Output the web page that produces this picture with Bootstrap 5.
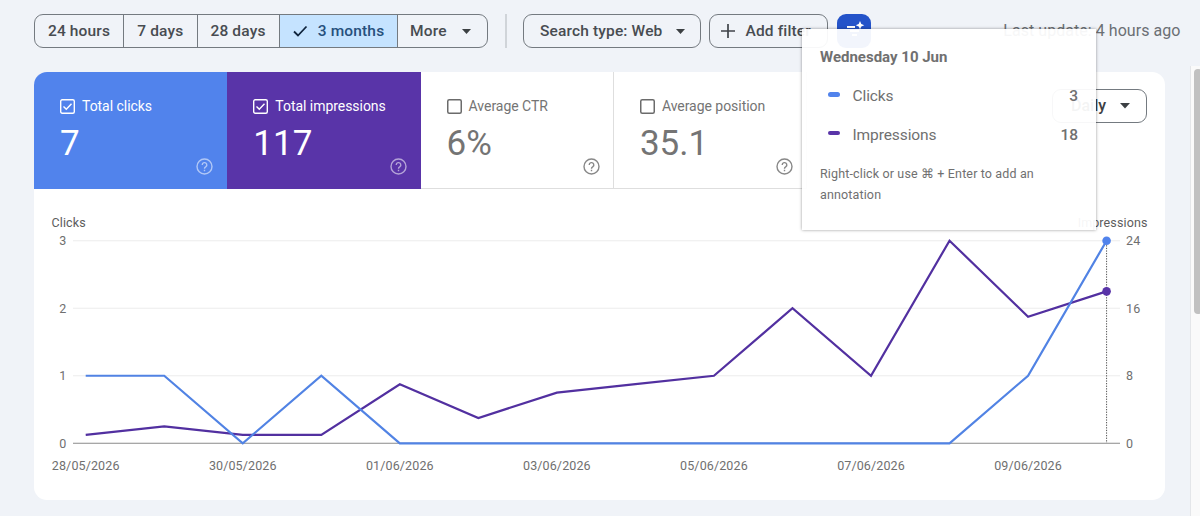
<!DOCTYPE html>
<html lang="en">
<head>
<meta charset="utf-8">
<title>Performance</title>
<link href="https://cdn.jsdelivr.net/npm/bootstrap@5.3.0/dist/css/bootstrap.min.css" rel="stylesheet">
<style>
body{width:1200px;height:516px;overflow:hidden;background:#f0f3f8;font-family:Roboto,"Liberation Sans",sans-serif;color:#3c4043}
.toolbar{height:71.5px;padding:14px 0 0 34px}
.toolbar .btn{height:34px;padding:0;font-size:15.5px;font-weight:500;line-height:32px;color:#484c51;border:1px solid #747a80;display:flex;align-items:center;justify-content:center;white-space:nowrap;letter-spacing:.15px;border-radius:9px}
.toolbar .btn-group .btn:not(:first-child){border-top-left-radius:0;border-bottom-left-radius:0}
.toolbar .btn-group .btn:not(:last-child){border-top-right-radius:0;border-bottom-right-radius:0}
.toolbar .btn-group .btn{flex:none}
.toolbar .chosen{background:#c5e3ff;color:#27507c}
.toolbar .ai-btn{background:#2453c9;border:0;width:34px}
.rule{width:2px;height:34px;background:#d0d4d9;margin:0 16px 0 17px}
.updated{font-size:16px;line-height:34px;color:#6b6f74;letter-spacing:.05px;margin-right:19.5px}
.panel{margin-left:34px;width:1131px;height:428.5px;border-radius:13px;background:#fff;overflow:hidden}
.tile{width:193.3px;height:117.5px;padding:24.5px 0 0 26px;border-right:1px solid #dedede;border-bottom:1px solid #dedede;color:#747474;position:relative}
.tile.on{color:#fff;border:0}
.tile .name{font-size:14px;line-height:20px;letter-spacing:-.04px;white-space:nowrap;gap:7px}
.tile .value{font-size:35px;line-height:40px;margin-top:7.5px;letter-spacing:0}
.tile .help{position:absolute;right:13px;bottom:13px;opacity:.85}
.tile.on .help{opacity:.55;right:14px;bottom:14px}
.clicks{background:#5183ec}
.impr{background:#5934a8}
.interval{width:95px;height:34px;margin:17.5px 18px 0 0;border:1px solid #747a80;border-radius:9px;font-size:16px;font-weight:500;color:#3c4043;padding:0 16px 0 18px}
.chart{display:block}
.chart text{font-size:12.5px;fill:#6f6f6f;letter-spacing:.12px}
.tip{position:absolute;left:802px;top:29px;width:293.5px;height:200.5px;background:rgba(255,255,255,.94);box-shadow:0 0 3px rgba(0,0,0,.4);color:#707070;padding:18px 17.5px 0 18px}
.tip .day{font-size:15px;line-height:20px;font-weight:700;letter-spacing:0}
.tip .line{font-size:15.5px;line-height:20px;letter-spacing:-.1px}
.tip .num{font-weight:500}
.dash{width:12px;height:4.5px;border-radius:2.5px;margin:0 13px 3px 7.5px}
.tip .hint{font-size:12.5px;line-height:21.5px;letter-spacing:.14px}
.track{position:absolute;right:0;top:66px;width:10px;bottom:0;background:#fafafa;border-left:1px solid #e4e6e9}
.thumb{width:8px;height:245px;margin:3px 0 0 3px;border-radius:5px;background:#c1c1c1}
</style>
</head>
<body class="position-relative">
<div class="toolbar d-flex align-items-start">
  <div class="btn-group">
    <button class="btn" style="width:90px">24 hours</button>
    <button class="btn" style="width:74.5px">7 days</button>
    <button class="btn" style="width:83px">28 days</button>
    <button class="btn chosen" style="width:119px"><svg width="17" height="14" viewBox="0 0 17 14" fill="none" stroke="#10253d" stroke-width="1.8" style="margin-right:9px"><path d="M2 7.500l4 4L14.500 2.500"/></svg>3 months</button>
    <button class="btn justify-content-start" style="width:91.5px;padding-left:12.5px">More<svg style="margin-left:15px" width="9" height="5"><path d="M0 0h9L4.500 5z" fill="#3c4043"/></svg></button>
  </div>
  <div class="rule"></div>
  <button class="btn justify-content-start" style="width:177.5px;margin-right:8.500px;padding-left:16px">Search type: Web<svg style="margin-left:14px" width="9" height="5"><path d="M0 0h9L4.500 5z" fill="#3c4043"/></svg></button>
  <button class="btn justify-content-start" style="width:119px;margin-right:9px;padding-left:10.5px"><svg width="14" height="14" style="margin-right:11px" stroke="#40444a" stroke-width="1.700"><path d="M7 0v14M0 7h14"/></svg>Add filter</button>
  <button class="btn ai-btn"><svg width="34" height="34" viewBox="0 0 34 34" fill="#fff"><path d="M10 12h8v2h-8zM13 16h9v2h-9zM15 20h5v2h-5zM23 7l1.300 3 3 1.300-3 1.300-1.300 3-1.300-3-3-1.300 3-1.300z"/></svg></button>
  <div class="updated ms-auto">Last update: 4 hours ago</div>
</div>

<div class="panel">
  <div class="d-flex">
    <div class="tile on clicks">
      <div class="name d-flex align-items-center"><svg width="15" height="15" fill="none" stroke="#fff" stroke-width="1.400"><rect x=".7" y=".7" width="13.600" height="13.600" rx="1.500"/><path d="M3.500 7.500l2.800 2.800 5.200-5.500"/></svg>Total clicks</div>
      <div class="value">7</div>
      <svg class="help" width="17" height="17" fill="none" stroke="currentColor" stroke-width="1.400"><circle cx="8.500" cy="8.500" r="7.500"/><path d="M6.200 7a2.300 2.300 0 1 1 3.500 1.900c-.8.500-1.200.9-1.200 1.800M8.500 11.800v1.500"/></svg>
    </div>
    <div class="tile on impr">
      <div class="name d-flex align-items-center"><svg width="15" height="15" fill="none" stroke="#fff" stroke-width="1.400"><rect x=".7" y=".7" width="13.600" height="13.600" rx="1.500"/><path d="M3.500 7.500l2.800 2.800 5.200-5.500"/></svg>Total impressions</div>
      <div class="value">117</div>
      <svg class="help" width="17" height="17" fill="none" stroke="currentColor" stroke-width="1.400"><circle cx="8.500" cy="8.500" r="7.500"/><path d="M6.200 7a2.300 2.300 0 1 1 3.500 1.900c-.8.500-1.200.9-1.200 1.800M8.500 11.800v1.500"/></svg>
    </div>
    <div class="tile">
      <div class="name d-flex align-items-center"><svg width="15" height="15" fill="none" stroke="#6b6b6b" stroke-width="1.500"><rect x=".75" y=".75" width="13.500" height="13.500" rx="1.500"/></svg>Average CTR</div>
      <div class="value">6%</div>
      <svg class="help" width="17" height="17" fill="none" stroke="currentColor" stroke-width="1.400"><circle cx="8.500" cy="8.500" r="7.500"/><path d="M6.200 7a2.300 2.300 0 1 1 3.500 1.900c-.8.500-1.200.9-1.200 1.800M8.500 11.800v1.500"/></svg>
    </div>
    <div class="tile">
      <div class="name d-flex align-items-center"><svg width="15" height="15" fill="none" stroke="#6b6b6b" stroke-width="1.500"><rect x=".75" y=".75" width="13.500" height="13.500" rx="1.500"/></svg>Average position</div>
      <div class="value">35.1</div>
      <svg class="help" width="17" height="17" fill="none" stroke="currentColor" stroke-width="1.400"><circle cx="8.500" cy="8.500" r="7.500"/><path d="M6.200 7a2.300 2.300 0 1 1 3.500 1.900c-.8.500-1.200.9-1.200 1.800M8.500 11.800v1.500"/></svg>
    </div>
    <div class="interval ms-auto d-flex align-items-center justify-content-between">Daily<svg width="10" height="6"><path d="M0 0h10L5 5.500z" fill="#3c4043"/></svg></div>
  </div>
  <svg class="chart" id="chart" width="1131" height="311" viewBox="34 189 1131 311"></svg>
</div>

<div class="tip">
  <div class="day">Wednesday 10 Jun</div>
  <div class="line d-flex align-items-center" style="margin-top:19px"><span class="dash clicks"></span>Clicks<span class="num ms-auto">3</span></div>
  <div class="line d-flex align-items-center" style="margin-top:18.500px"><span class="dash impr"></span>Impressions<span class="num ms-auto">18</span></div>
  <div class="hint" style="margin-top:18px">Right-click or use ⌘ + Enter to add an<br>annotation</div>
</div>
<div class="track"><div class="thumb"></div></div>

<script src="https://cdn.jsdelivr.net/npm/bootstrap@5.3.0/dist/js/bootstrap.bundle.min.js"></script>
<script>
const clicks = [1,1,0,1,0,0,0,0,0,0,0,0,1,3];
const impressions = [1,2,1,1,7,3,6,7,8,16,8,24,15,18];
const dates = ['28/05/2026','30/05/2026','01/06/2026','03/06/2026','05/06/2026','07/06/2026','09/06/2026'];
const base = 443.3, height = 202.6;
const px = i => 85.7 + i * 78.53;
const py = (v, max) => base - v / max * height;
const points = (data, max) => data.map((v, i) => px(i) + ',' + py(v, max)).join(' ');
let out = '';
for (let i = 0; i < 4; i++) {
  const y = py(i, 3);
  out += `<path d="M73 ${y}H1120" stroke="${i ? '#ececec' : '#8a8a8a'}" stroke-width="1.1"/>`;
  out += `<text x="66.500" y="${y + 4.5}" text-anchor="end">${i}</text><text x="1126" y="${y + 4.5}">${i * 8}</text>`;
}
dates.forEach((d, i) => out += `<text x="${px(i * 2)}" y="469.500" text-anchor="middle">${d}</text>`);
out += `<text x="51.500" y="227" style="fill:#5c5c5c">Clicks</text><text x="1147.500" y="227" text-anchor="end" style="fill:#5c5c5c">Impressions</text>`;
out += `<path d="M${px(13)} 240V443" stroke="#555" stroke-dasharray="1.300 1.300"/>`;
out += `<polyline points="${points(impressions, 24)}" fill="none" stroke="#5230a0" stroke-width="2.2"/>`;
out += `<polyline points="${points(clicks, 3)}" fill="none" stroke="#5183e4" stroke-width="2.2"/>`;
out += `<circle cx="${px(13)}" cy="${py(18, 24)}" r="4.300" fill="#5934a8"/><circle cx="${px(13)}" cy="${py(3, 3)}" r="4.300" fill="#5183ec"/>`;
document.getElementById('chart').innerHTML = out;
</script>
</body>
</html>
